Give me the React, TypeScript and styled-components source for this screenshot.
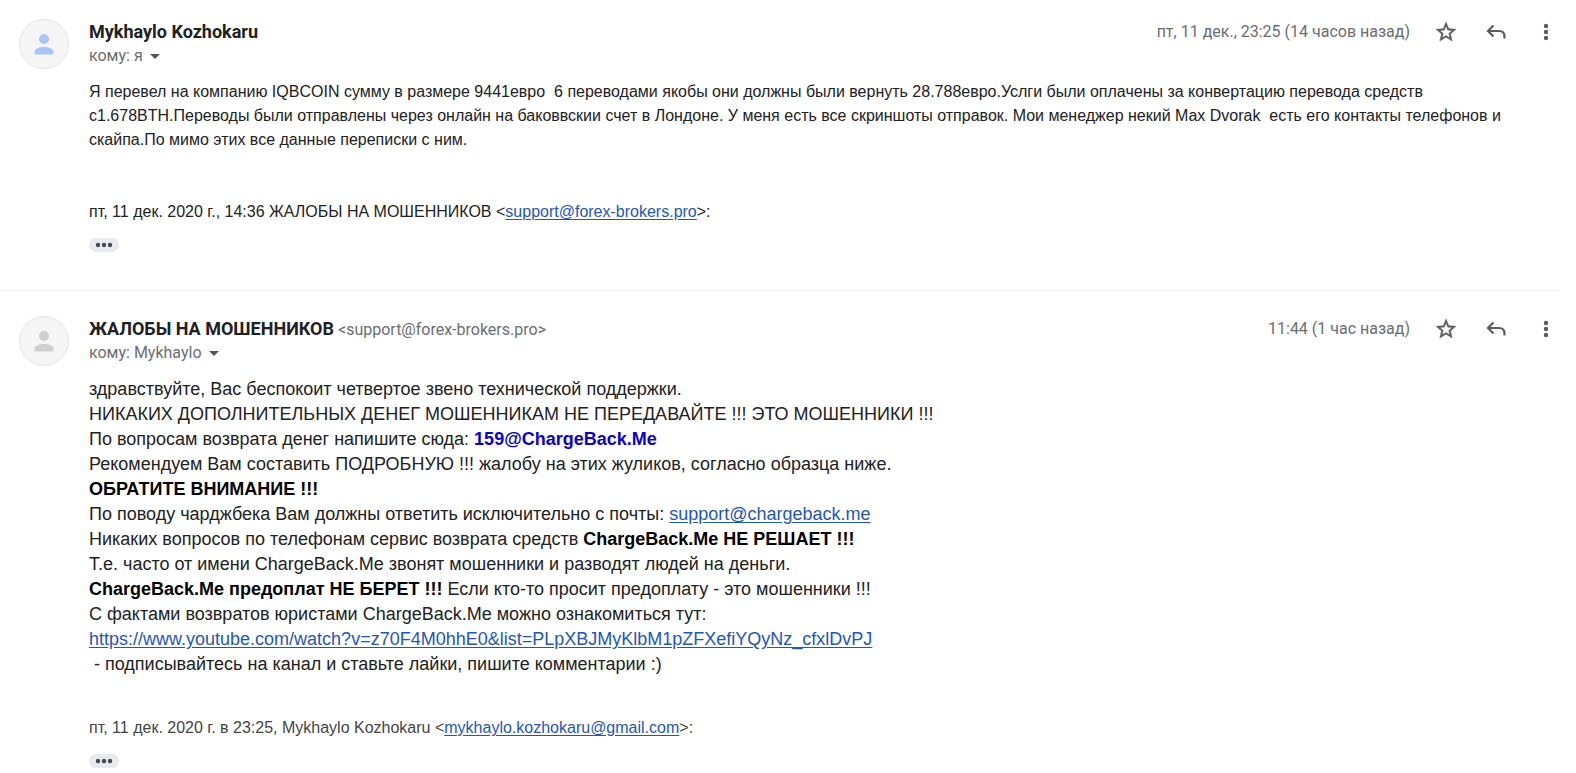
import React from "react";
import styled, { createGlobalStyle } from "styled-components";

const GlobalStyle = createGlobalStyle`
  * { box-sizing: border-box; }
  body {
    margin: 0;
    background: #fff;
    color: #222;
    font-family: "Liberation Sans", Arial, sans-serif;
  }
`;

const Thread = styled.main`
  padding: 19px 16px 0 0;
`;

const Message = styled.article`
  display: grid;
  grid-template-columns: 50px minmax(0, 1fr);
  column-gap: 20px;
  padding-left: 19px;

  & + & {
    margin-top: 38px;
    padding-top: 25px;
    border-top: 1px solid #ececec;
  }
`;

const Avatar = styled.div<{ $color: string }>`
  width: 50px;
  height: 50px;
  border: 1px solid #e4e4e4;
  border-radius: 50%;
  background: #f5f5f5;
  color: ${(p) => p.$color};
  display: flex;
  align-items: center;
  justify-content: center;
`;

const Header = styled.header`
  display: flex;
  justify-content: space-between;
  align-items: flex-start;
  padding-top: 1px;
  margin-bottom: 12px;
  font-family: Roboto, sans-serif;
  line-height: 24px;
  color: #6b6e71;
`;

const SenderLine = styled.div`
  display: flex;
  align-items: baseline;
  gap: 4px;
  height: 24px;
  font-size: 16px;
`;

const SenderName = styled.h2`
  margin: 0;
  font-size: 18px;
  font-weight: 700;
  line-height: 24px;
  color: #202124;
`;

const plainButton = `
  border: 0;
  padding: 0;
  background: none;
  color: inherit;
  font: inherit;
  cursor: pointer;
`;

const Recipient = styled.button`
  ${plainButton}
  display: flex;
  align-items: center;
  gap: 7px;
  font-size: 16px;
  line-height: 24px;
`;

const Actions = styled.div`
  display: flex;
  align-items: center;
  gap: 22px;
  height: 24px;
`;

const SentAt = styled.time`
  font-size: 16px;
`;

const IconButton = styled.button`
  ${plainButton}
  width: 28px;
  height: 24px;
  display: flex;
  align-items: center;
  justify-content: center;
  color: #5c5c5c;
`;

const Body = styled.div<{ $large?: boolean }>`
  font-size: ${(p) => (p.$large ? 18 : 16)}px;
  line-height: ${(p) => (p.$large ? 25 : 24)}px;
  margin-bottom: ${(p) => (p.$large ? 39 : 48)}px;
  overflow-wrap: break-word;
`;

const Line = styled.p`
  margin: 0;
`;

const Strong = styled.strong`
  color: #000;
`;

const Link = styled.a`
  color: #1f57b8;
  text-underline-offset: 2px;
`;

const BoldLink = styled.a`
  color: #0b00c8;
  font-weight: 700;
  text-decoration: none;
`;

const Quote = styled.div<{ $muted?: boolean }>`
  font-size: 16px;
  line-height: 24px;
  margin-bottom: 14px;
  color: ${(p) => (p.$muted ? "#444" : "#222")};
`;

const Trimmed = styled.button`
  ${plainButton}
  width: 30px;
  height: 14px;
  border-radius: 7px;
  background: #e8eaed;
  color: #4a4850;
  display: flex;
  align-items: center;
  justify-content: center;
`;

const PersonIcon = () => (
  <svg width="30" height="30" viewBox="0 0 30 30" fill="currentColor" aria-hidden="true">
    <circle cx="15" cy="10" r="5" />
    <path d="M5.500 25.500v-2.500c0-3.300 5-5 9.500-5s9.500 1.700 9.500 5v2.500z" />
  </svg>
);

const StarIcon = () => (
  <svg width="24" height="24" viewBox="0 0 24 24" fill="currentColor" stroke="currentColor" strokeWidth="0.400" aria-hidden="true">
    <path d="M22 9.240l-7.190-.62L12 2 9.190 8.630 2 9.240l5.460 4.730L5.820 21 12 17.270 18.180 21l-1.630-7.030L22 9.240zM12 15.400l-3.760 2.270 1-4.280-3.320-2.880 4.380-.38L12 6.100l1.710 4.040 4.380.38-3.320 2.880 1 4.280L12 15.400z" />
  </svg>
);

const ReplyIcon = () => (
  <svg width="20" height="16" viewBox="0 0 20 16" fill="none" stroke="currentColor" strokeWidth="2.200" aria-hidden="true">
    <path d="M7.500 1.500 2 7l5.500 5.500M2 7h11q5.500 0 5.500 5.500v2" />
  </svg>
);

const MoreIcon = () => (
  <svg width="6" height="18" viewBox="0 0 6 18" fill="currentColor" aria-hidden="true">
    <circle cx="3" cy="3" r="2.200" />
    <circle cx="3" cy="9" r="2.200" />
    <circle cx="3" cy="15" r="2.200" />
  </svg>
);

const Caret = () => (
  <svg width="10" height="5" viewBox="0 0 10 5" fill="#555" aria-hidden="true">
    <path d="M0 0h10L5 5z" />
  </svg>
);

const DotsIcon = () => (
  <svg width="18" height="6" viewBox="0 0 18 6" fill="currentColor" aria-hidden="true">
    <circle cx="3" cy="3" r="2.200" />
    <circle cx="9" cy="3" r="2.200" />
    <circle cx="15" cy="3" r="2.200" />
  </svg>
);

type HeaderProps = { name: string; email?: string; to: string; sent: string };

const MessageHeader = ({ name, email, to, sent }: HeaderProps) => (
  <Header>
    <div>
      <SenderLine>
        <SenderName>{name}</SenderName>
        {email && <span>&lt;{email}&gt;</span>}
      </SenderLine>
      <Recipient type="button">
        кому: {to}
        <Caret />
      </Recipient>
    </div>
    <Actions>
      <SentAt>{sent}</SentAt>
      <IconButton type="button" aria-label="Пометить"><StarIcon /></IconButton>
      <IconButton type="button" aria-label="Ответить"><ReplyIcon /></IconButton>
      <IconButton type="button" aria-label="Ещё"><MoreIcon /></IconButton>
    </Actions>
  </Header>
);

const ShowTrimmed = () => (
  <Trimmed type="button" aria-label="Показать скрытый текст"><DotsIcon /></Trimmed>
);

const video = "https://www.youtube.com/watch?v=z70F4M0hhE0&list=PLpXBJMyKlbM1pZFXefiYQyNz_cfxlDvPJ";

export default function App() {
  return (
    <>
      <GlobalStyle />
      <Thread>
        <Message>
          <Avatar $color="#a9c5f6"><PersonIcon /></Avatar>
          <div>
            <MessageHeader name="Mykhaylo Kozhokaru" to="я" sent="пт, 11 дек., 23:25 (14 часов назад)" />
            <Body>
              <Line>
                Я перевел на компанию IQBCOIN сумму в размере 9441евро&nbsp; 6 переводами якобы они должны были вернуть
                28.788евро.Услги были оплачены за конвертацию перевода средств с1.678BTH.Переводы были отправлены через
                онлайн на баковвскии счет в Лондоне. У меня есть все скриншоты отправок. Мои менеджер некий Max
                Dvorak&nbsp; есть его контакты телефонов и скайпа.По мимо этих все данные переписки с ним.
              </Line>
            </Body>
            <Quote>
              пт, 11 дек. 2020 г., 14:36 ЖАЛОБЫ НА МОШЕННИКОВ &lt;
              <Link href="mailto:support@forex-brokers.pro">support@forex-brokers.pro</Link>&gt;:
            </Quote>
            <ShowTrimmed />
          </div>
        </Message>

        <Message>
          <Avatar $color="#cfcfcf"><PersonIcon /></Avatar>
          <div>
            <MessageHeader
              name="ЖАЛОБЫ НА МОШЕННИКОВ"
              email="support@forex-brokers.pro"
              to="Mykhaylo"
              sent="11:44 (1 час назад)"
            />
            <Body $large>
              <Line>здравствуйте, Вас беспокоит четвертое звено технической поддержки.</Line>
              <Line>НИКАКИХ ДОПОЛНИТЕЛЬНЫХ ДЕНЕГ МОШЕННИКАМ НЕ ПЕРЕДАВАЙТЕ !!! ЭТО МОШЕННИКИ !!!</Line>
              <Line>
                По вопросам возврата денег напишите сюда:{" "}
                <BoldLink href="mailto:159@ChargeBack.Me">159@ChargeBack.Me</BoldLink>
              </Line>
              <Line>Рекомендуем Вам составить ПОДРОБНУЮ !!! жалобу на этих жуликов, согласно образца ниже.</Line>
              <Line><Strong>ОБРАТИТЕ ВНИМАНИЕ !!!</Strong></Line>
              <Line>
                По поводу чарджбека Вам должны ответить исключительно с почты:{" "}
                <Link href="mailto:support@chargeback.me">support@chargeback.me</Link>
              </Line>
              <Line>
                Никаких вопросов по телефонам сервис возврата средств <Strong>ChargeBack.Me НЕ РЕШАЕТ !!!</Strong>
              </Line>
              <Line>Т.е. часто от имени ChargeBack.Me звонят мошенники и разводят людей на деньги.</Line>
              <Line>
                <Strong>ChargeBack.Me предоплат НЕ БЕРЕТ !!!</Strong> Если кто-то просит предоплату - это мошенники !!!
              </Line>
              <Line>С фактами возвратов юристами ChargeBack.Me можно ознакомиться тут:</Line>
              <Line><Link href={video}>{video}</Link></Line>
              <Line>&nbsp;- подписывайтесь на канал и ставьте лайки, пишите комментарии :)</Line>
            </Body>
            <Quote $muted>
              пт, 11 дек. 2020 г. в 23:25, Mykhaylo Kozhokaru &lt;
              <Link href="mailto:mykhaylo.kozhokaru@gmail.com">mykhaylo.kozhokaru@gmail.com</Link>&gt;:
            </Quote>
            <ShowTrimmed />
          </div>
        </Message>
      </Thread>
    </>
  );
}
